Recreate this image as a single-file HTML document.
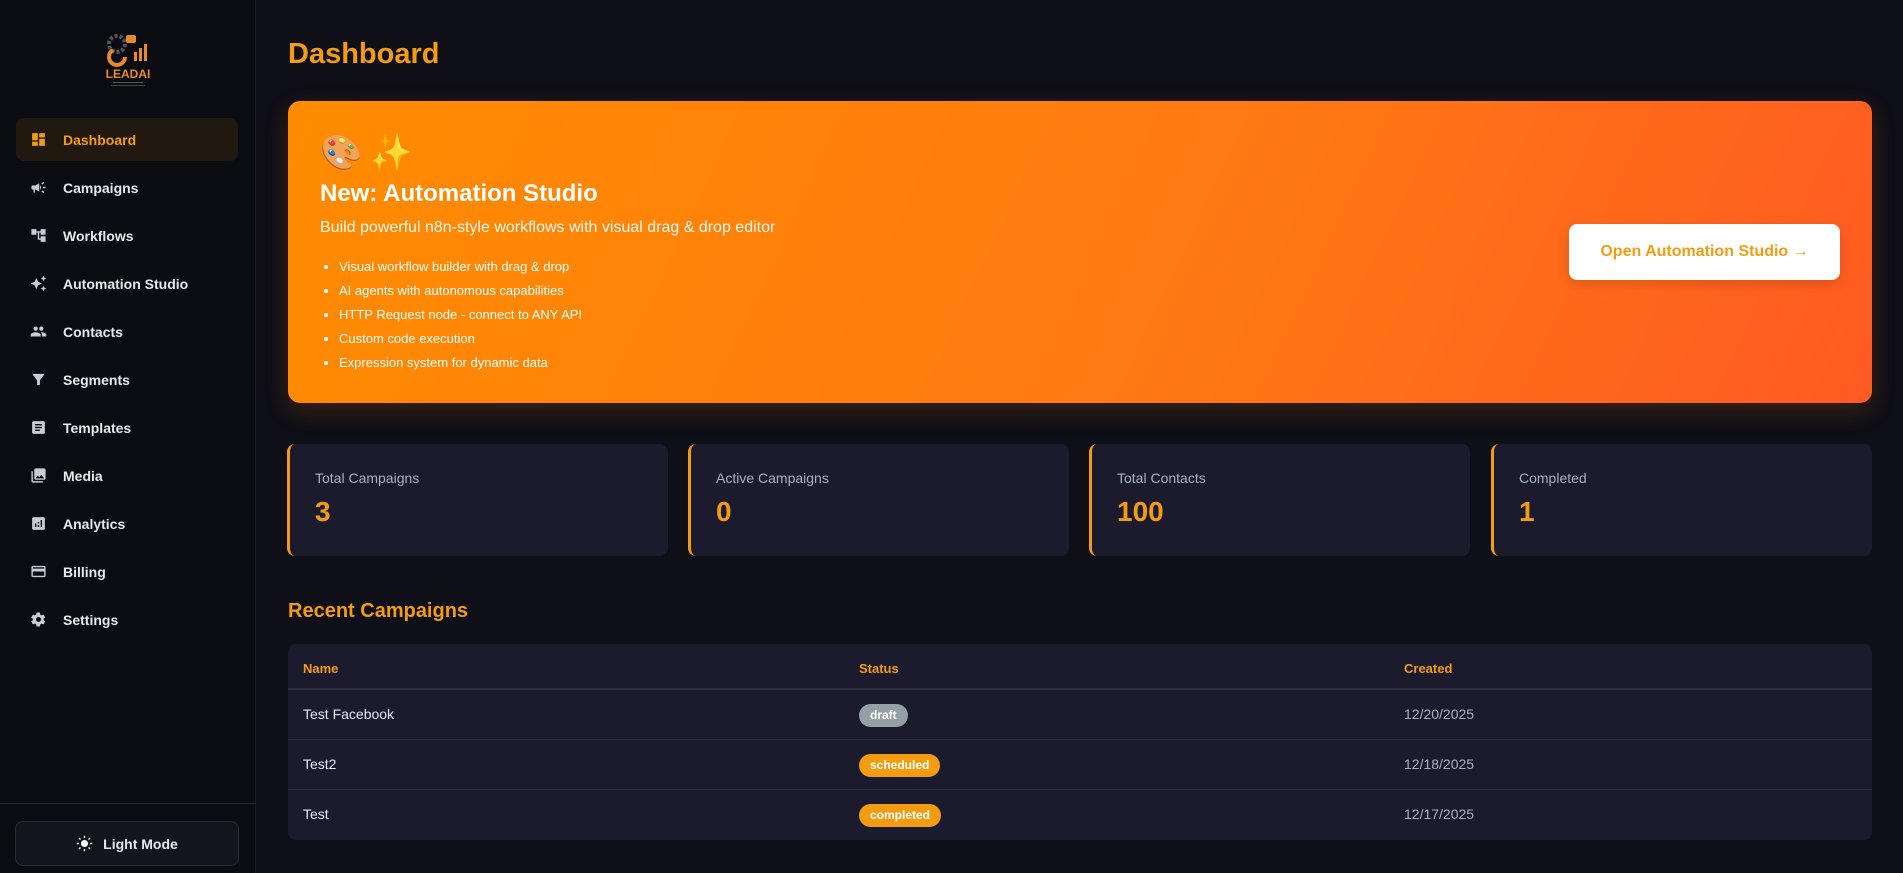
<!DOCTYPE html>
<html><head><meta charset="utf-8"><style>
*{box-sizing:border-box;margin:0;padding:0}
body{width:1903px;height:873px;background:#0f0f17;font-family:"Liberation Sans",sans-serif;color:#e8e8f0;position:relative;overflow:hidden}
.side{position:absolute;left:0;top:0;width:256px;height:873px;background:#0b0c12;border-right:1px solid #1a1b24}
.nav{position:absolute;left:16px;width:222px;height:43px;border-radius:8px;display:flex;align-items:center;padding-left:14px;font-size:14px;font-weight:bold;color:#e6e8f0}
.nav svg{width:17px;height:17px;margin-right:16px;fill:#c9ccd4}
.nav.act{background:#21190f;color:#f39c12}
.nav.act svg{fill:#f39c12}
.lm{position:absolute;left:15px;top:821px;width:224px;height:45px;border:1px solid #2a2b36;border-radius:8px;background:#14151c;display:flex;align-items:center;justify-content:center;font-size:14px;font-weight:bold;color:#e6e8f0}
.h1{position:absolute;left:288px;top:38px;font-size:29px;font-weight:bold;color:#f39c12}
.banner{position:absolute;left:288px;top:101px;width:1584px;height:302px;border-radius:12px;background:linear-gradient(115deg,#ff8c00 0%,#ff7a12 55%,#ff5a22 100%);box-shadow:0 8px 24px rgba(255,120,0,.18);color:#fff}
.btn{position:absolute;left:1281px;top:123px;width:271px;height:56px;background:#fff;border-radius:8px;display:flex;align-items:center;justify-content:center;color:#f39c12;font-weight:bold;font-size:16px;box-shadow:0 4px 12px rgba(0,0,0,.15)}
.card{position:absolute;top:444px;width:381px;height:112px;background:#1c1b2e;border-radius:8px;border-left:3px solid #f39c12}
.card .l{position:absolute;left:25px;top:26px;font-size:14px;color:#a9afc4}
.card .n{position:absolute;left:25px;top:52px;font-size:28px;font-weight:bold;color:#f39c12}
.h2{position:absolute;left:288px;top:600px;font-size:20px;font-weight:bold;color:#f39c12}
.tbl{position:absolute;left:288px;top:644px;width:1584px;height:196px;background:#1c1b2e;border-radius:8px;overflow:hidden}
.row{position:absolute;left:0;width:100%;font-size:14px}
.row span{position:absolute}
.badge{display:inline-block;height:23px;line-height:23px;padding:0 11px;border-radius:12px;font-size:12px;font-weight:bold;color:#fff;top:-10px}
ul li{list-style:disc;color:#fff}
</style></head><body>
<div class="side">
 <svg style="position:absolute;left:101px;top:32px" width="54" height="56" viewBox="0 0 54 56">
  <circle cx="16" cy="12" r="8" fill="none" stroke="#555" stroke-width="4" stroke-dasharray="3 2"/>
  <path d="M12 18a8 8 0 1 0 12 7" fill="none" stroke="#e8892a" stroke-width="4"/>
  <rect x="25" y="3" width="10" height="8" rx="2" fill="#e8892a"/>
  <rect x="33" y="20" width="3" height="9" fill="#e8892a"/><rect x="38" y="16" width="3" height="13" fill="#e8892a"/><rect x="43" y="12" width="3" height="17" fill="#e8892a"/>
  <text x="27" y="46" text-anchor="middle" font-family="Liberation Sans" font-weight="bold" font-size="12" fill="#e8892a">LEADAI</text>
  <rect x="12" y="50" width="30" height="1" fill="#555"/><rect x="10" y="53" width="34" height="1" fill="#444"/>
 </svg>
 <div class="nav act" style="top:118px"><svg viewBox="0 0 24 24"><path d="M3 13h8V3H3zm0 8h8v-6H3zm10 0h8V11h-8zm0-18v6h8V3z"/></svg>Dashboard</div>
 <div class="nav" style="top:166px"><svg viewBox="0 0 24 24"><path d="M18 11v2h4v-2zm-2 6.6 3.2 2.4 1.2-1.6-3.2-2.4zM20.4 5.6 19.2 4 16 6.4l1.2 1.6zM4 9c-1.1 0-2 .9-2 2v2c0 1.1.9 2 2 2h1v4h2v-4h1l5 3V6L8 9zm11.5 3c0-1.3-.6-2.5-1.5-3.3v6.6c.9-.8 1.5-2 1.5-3.3"/></svg>Campaigns</div>
 <div class="nav" style="top:214px"><svg viewBox="0 0 24 24"><path d="M22 11V3h-7v3H9V3H2v8h7V8h2v10h4v3h7v-8h-7v3h-2V8h2v3z"/></svg>Workflows</div>
 <div class="nav" style="top:262px"><svg viewBox="0 0 24 24"><path d="M19 9l1.25-2.75L23 5l-2.75-1.25L19 1l-1.25 2.75L15 5l2.75 1.25zm-7.5.5L9 4 6.5 9.5 1 12l5.5 2.5L9 20l2.5-5.5L17 12zM19 15l-1.25 2.75L15 19l2.75 1.25L19 23l1.25-2.75L23 19l-2.75-1.25z"/></svg>Automation Studio</div>
 <div class="nav" style="top:310px"><svg viewBox="0 0 24 24"><path d="M16 11c1.7 0 3-1.3 3-3s-1.3-3-3-3-3 1.3-3 3 1.3 3 3 3m-8 0c1.7 0 3-1.3 3-3S9.7 5 8 5 5 6.3 5 8s1.3 3 3 3m0 2c-2.3 0-7 1.2-7 3.5V19h14v-2.5C15 14.2 10.3 13 8 13m8 0c-.3 0-.6 0-1 .1 1.2.8 2 2 2 3.4V19h6v-2.5c0-2.3-4.700-3.5-7-3.5"/></svg>Contacts</div>
 <div class="nav" style="top:358px"><svg viewBox="0 0 24 24"><path d="M4.25 5.6C6.3 8.2 10 13 10 13v6c0 .6.4 1 1 1h2c.6 0 1-.4 1-1v-6s3.7-4.8 5.7-7.4c.5-.7 0-1.6-.8-1.6H5c-.8 0-1.3.9-.75 1.6"/></svg>Segments</div>
 <div class="nav" style="top:406px"><svg viewBox="0 0 24 24"><path d="M19 3H5c-1.1 0-2 .9-2 2v14c0 1.1.9 2 2 2h14c1.1 0 2-.9 2-2V5c0-1.1-.9-2-2-2m-5 14H7v-2h7zm3-4H7v-2h10zm0-4H7V7h10z"/></svg>Templates</div>
 <div class="nav" style="top:454px"><svg viewBox="0 0 24 24"><path d="M22 16V4c0-1.1-.9-2-2-2H8c-1.1 0-2 .9-2 2v12c0 1.1.9 2 2 2h12c1.1 0 2-.9 2-2m-11-4 2 2.7 3-3.7 4 5H8zM2 6v14c0 1.1.9 2 2 2h14v-2H4V6z"/></svg>Media</div>
 <div class="nav" style="top:502px"><svg viewBox="0 0 24 24"><path d="M19 3H5c-1.1 0-2 .9-2 2v14c0 1.1.9 2 2 2h14c1.1 0 2-.9 2-2V5c0-1.1-.9-2-2-2M9 17H7v-5h2zm4 0h-2v-3h2zm0-5h-2v-2h2zm4 5h-2V7h2z"/></svg>Analytics</div>
 <div class="nav" style="top:550px"><svg viewBox="0 0 24 24"><path d="M20 4H4c-1.1 0-2 .9-2 2v12c0 1.1.9 2 2 2h16c1.1 0 2-.9 2-2V6c0-1.1-.9-2-2-2m0 14H4v-6h16zm0-10H4V6h16z"/></svg>Billing</div>
 <div class="nav" style="top:598px"><svg viewBox="0 0 24 24"><path d="M19.1 12.9a7 7 0 0 0 0-1.8l2.1-1.6c.2-.2.2-.4.1-.6l-2-3.5c-.1-.2-.4-.3-.6-.2l-2.5 1c-.5-.4-1.1-.7-1.7-1l-.4-2.6c0-.2-.2-.4-.5-.4h-4c-.2 0-.4.2-.5.4l-.4 2.6c-.6.3-1.2.6-1.7 1l-2.5-1c-.2-.1-.5 0-.6.2l-2 3.5c-.1.2-.1.5.1.6l2.1 1.6a7 7 0 0 0 0 1.8l-2.1 1.6c-.2.2-.2.4-.1.6l2 3.5c.1.2.4.3.6.2l2.5-1c.5.4 1.1.7 1.7 1l.4 2.6c0 .2.2.4.5.4h4c.2 0 .4-.2.5-.4l.4-2.6c.6-.3 1.2-.6 1.7-1l2.5 1c.2.1.5 0 .6-.2l2-3.5c.1-.2.1-.5-.1-.6zM12 15.5A3.5 3.5 0 1 1 12 8.5a3.5 3.5 0 0 1 0 7"/></svg>Settings</div>
 <div style="position:absolute;left:0;top:803px;width:256px;height:1px;background:#24252e"></div>
 <div class="lm"><svg width="17" height="17" viewBox="0 0 24 24" style="margin-right:10px"><circle cx="12" cy="12" r="5" fill="#fff"/><g stroke="#fff" stroke-width="2"><path d="M12 1v3M12 20v3M1 12h3M20 12h3M4.2 4.2l2.1 2.1M17.7 17.7l2.1 2.1M4.2 19.8l2.1-2.1M17.7 6.3l2.1-2.1"/></g></svg>Light Mode</div>
</div>
<div class="h1">Dashboard</div>
<div class="banner">
 <div style="position:absolute;left:32px;top:30px;font-size:34px;line-height:44px;letter-spacing:8px;font-family:'Noto Color Emoji','DejaVu Sans',sans-serif">🎨✨</div>
 <div style="position:absolute;left:32px;top:79px;font-size:24px;font-weight:bold">New: Automation Studio</div>
 <div style="position:absolute;left:32px;top:118px;font-size:16px;opacity:.95">Build powerful n8n-style workflows with visual drag &amp; drop editor</div>
 <ul style="position:absolute;left:51px;top:154px;font-size:13px;line-height:24px;margin:0;padding:0">
  <li>Visual workflow builder with drag &amp; drop</li>
  <li>AI agents with autonomous capabilities</li>
  <li>HTTP Request node - connect to ANY API</li>
  <li>Custom code execution</li>
  <li>Expression system for dynamic data</li>
 </ul>
 <div class="btn">Open Automation Studio →</div>
</div>
<div class="card" style="left:287px"><div class="l">Total Campaigns</div><div class="n">3</div></div>
<div class="card" style="left:688px"><div class="l">Active Campaigns</div><div class="n">0</div></div>
<div class="card" style="left:1089px"><div class="l">Total Contacts</div><div class="n">100</div></div>
<div class="card" style="left:1491px"><div class="l">Completed</div><div class="n">1</div></div>
<div class="h2">Recent Campaigns</div>
<div class="tbl">
 <div class="row" style="top:17px;color:#f39c12;font-weight:bold;font-size:13px"><span style="left:15px">Name</span><span style="left:571px">Status</span><span style="left:1116px">Created</span></div>
 <div style="position:absolute;left:0;top:44px;width:100%;height:2px;background:#2c2d40"></div>
 <div class="row" style="top:70px"><span style="left:15px;top:-8px">Test Facebook</span><span class="badge" style="left:571px;background:#95a0a6">draft</span><span style="left:1116px;top:-8px;color:#a9afc4">12/20/2025</span></div>
 <div style="position:absolute;left:0;top:95px;width:100%;height:1px;background:#2c2d40"></div>
 <div class="row" style="top:120px"><span style="left:15px;top:-8px">Test2</span><span class="badge" style="left:571px;background:#f39c12">scheduled</span><span style="left:1116px;top:-8px;color:#a9afc4">12/18/2025</span></div>
 <div style="position:absolute;left:0;top:145px;width:100%;height:1px;background:#2c2d40"></div>
 <div class="row" style="top:170px"><span style="left:15px;top:-8px">Test</span><span class="badge" style="left:571px;background:#f39c12">completed</span><span style="left:1116px;top:-8px;color:#a9afc4">12/17/2025</span></div>
</div>
</body></html>
